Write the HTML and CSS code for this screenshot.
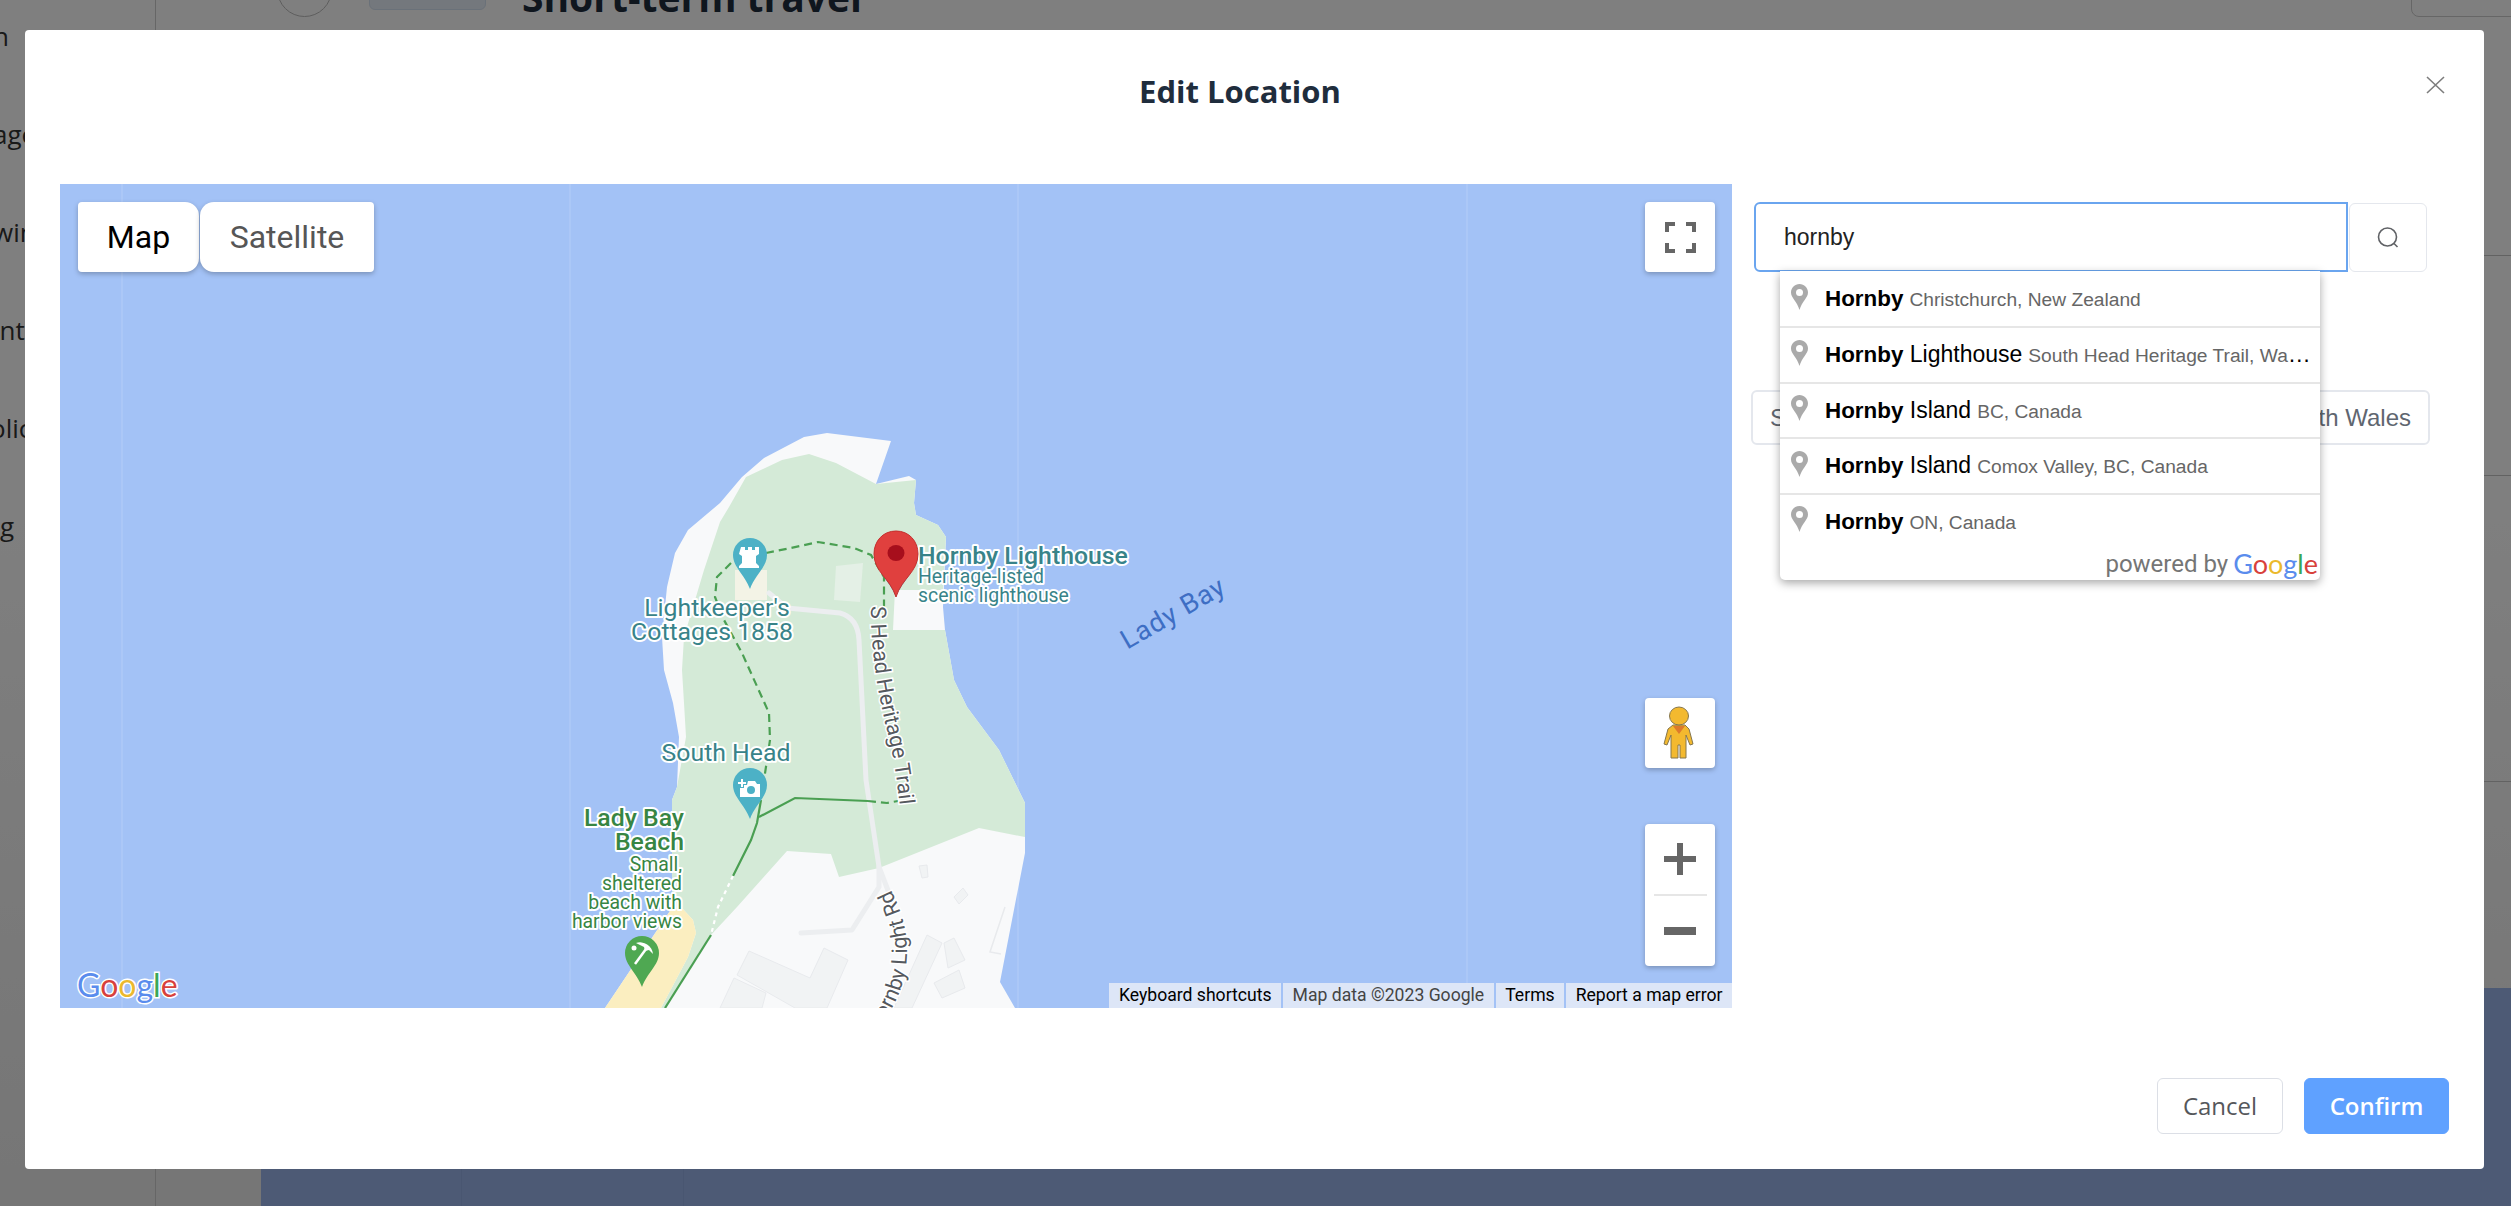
FILE: index.html
```html
<!DOCTYPE html>
<html lang="en">
    <head>
        <meta charset="UTF-8" />
        <meta name="viewport" content="width=device-width, initial-scale=1.0" />
        <title>Edit Location</title>
        <link rel="stylesheet" href="styles.css">
    </head>
    <body>
        <!-- page behind the dialog -->
        <div class="page">
            <div class="sidebar">
                <div class="nav-item">n</div>
                <div class="nav-item">age</div>
                <div class="nav-item">win</div>
                <div class="nav-item">int</div>
                <div class="nav-item nav-deep">olic</div>
                <div class="nav-item nav-flush">g</div>
            </div>
            <div class="main">
                <div class="page-head">
                    <div class="avatar"></div>
                    <div class="tag"></div>
                    <h1>Short-term travel</h1>
                    <div class="head-btn"></div>
                </div>
                <div class="line-row row-a"></div>
                <div class="line-row row-b"></div>
                <div class="line-row row-c"></div>
                <div class="spacer"></div>
                <div class="foot">
                    <div class="foot-col col-a"></div>
                    <div class="foot-col col-b"></div>
                </div>
            </div>
        </div>

        <div class="overlay"></div>

        <div class="modal">
            <div class="modal-head">
                <h2>Edit Location</h2>
                <svg class="close" viewBox="0 0 19 18">
                    <path d="M1 1L18 17M18 1L1 17" />
                </svg>
            </div>

            <div class="modal-body">
                <div class="map">
                    <svg class="map-canvas" viewBox="60 184 1672 824">
                        <defs>
                            <path id="pin" d="M-17 0a17 17 0 1 1 34 0c0 12-12 20-17 34c-5-14-17-22-17-34z" />
                        </defs>
                        <rect class="water" x="60" y="184" width="1672" height="824" />
                        <path class="seam" d="M122 184V1008M570 184V1008M1018 184V1008M1467 184V1008" />

                        <!-- land -->
                        <path class="land" d="M891 441L876 484L909 476L916 480L914 503L916 515L938 525L946 537L943 607L945 630L954 680L967 707L999 750L1025 803L1025 853L1000 982L1015 1008L605 1008L672 908L672 800L677 787L679 737L673 703L664 670L662 637L667 587L675 553L688 530L720 503L742 477L764 458L804 437L827 433Z" />
                        <path class="park" d="M876 484L916 480L914 503L916 515L938 525L946 537L943 590L895 590L893 630L945 630L954 680L967 707L999 750L1025 803L1025 837L979 828L879 868L839 877L831 854L787 851L737 907L711 935L665 1008L661 1008L688 957L696 933L693 920L682 908L672 908L672 800L677 787L686 737L684 703L682 670L684 637L704 570L720 522L729 507L746 477L782 460L809 454L836 463Z" />
                        <path class="beach" d="M672 908L682 908L693 920L696 933L688 957L661 1008L605 1008Z" />
                        <path class="patch" d="M836 566L863 563L860 602L834 600Z" />
                        <path class="patch-b" d="M735 570L767 570L767 600L735 600Z" />

                        <!-- buildings -->
                        <path class="bld" d="M749 951L810 978L824 948L848 960L827 1008L795 1008L737 975Z" />
                        <path class="bld" d="M734 978L766 993L762 1008L720 1008Z" />
                        <path class="bld" d="M927 935L942 943L912 1008L894 1008Z" />
                        <path class="bld" d="M944 943L954 938L965 960L948 968Z" />
                        <path class="bld" d="M934 983L959 970L965 988L942 998Z" />
                        <path class="bld" d="M919 866L927 865L928 877L922 878Z" />
                        <path class="bld" d="M954 897L963 888L968 895L959 904Z" />
                        <path class="bld-line" d="M1005 907L990 952L1001 954" />

                        <!-- roads -->
                        <path class="road" d="M769 593L787 608L840 613Q858 618 859 640L866 780L879 867L889 893" />
                        <path class="road" d="M879 867L879 887L852 930L801 933" />

                        <!-- trails -->
                        <path class="trail dash" d="M766 553L791 548L818 542L854 548L871 555L884 577L884 610" />
                        <path class="trail dash" d="M731 563L717 577L715 597L724 620L742 653L769 713L770 740L764 780" />
                        <path class="trail" d="M759 817L795 798L868 801" />
                        <path class="trail dash" d="M868 801L887 803L898 801" />
                        <path class="trail" d="M761 800L757 823L751 840L733 876" />
                        <path class="trail-white" d="M733 876L718 907L711 935" />
                        <path class="trail" d="M711 935L665 1008" />

                        <!-- road labels -->
                        <path id="trail-label" class="no-stroke" d="M871 606C870 650 879 700 887 730S898 790 901 816" />
                        <path id="road-label" class="no-stroke" d="M876 1032Q930 965 890 888" />
                        <text class="lbl-road"><textPath href="#trail-label">S Head Heritage Trail</textPath></text>
                        <text class="lbl-road"><textPath href="#road-label">Hornby Light Rd</textPath></text>

                        <!-- place pins -->
                        <use href="#pin" class="pin-teal" x="750" y="555" />
                        <path class="glyph" d="M741 547h4v3h3v-3h4v3h3v-3h4v7l-3 2v7l3 3v2h-20v-2l3-3v-7l-3-2z" />
                        <use href="#pin" class="pin-teal" x="750" y="785" />
                        <path class="glyph" d="M741 779h2v3h3v2h-3v3h-2v-3h-3v-2h3zM748 781h7l2 3h3v13h-20v-9h4v-3h3z" />
                        <circle class="pin-hole" cx="751" cy="790" r="4" />
                        <use href="#pin" class="pin-green" x="642" y="953" />
                        <circle class="glyph" cx="634" cy="948" r="2.5" />
                        <path class="glyph" d="M636 943a13 13 0 0 1 17 11l-4-4l-4 1l-1-4z" />
                        <path class="glyph-line" d="M646 949L635 964" />
                        <use href="#pin" class="pin-teal" x="896" y="563" />

                        <!-- place labels -->
                        <text class="lbl lbl-teal" x="717" y="616" text-anchor="middle">Lightkeeper's</text>
                        <text class="lbl lbl-teal" x="712" y="640" text-anchor="middle">Cottages 1858</text>
                        <text class="lbl lbl-teal" x="726" y="761" text-anchor="middle">South Head</text>
                        <text class="lbl lbl-teal lbl-bold" x="918" y="564">Hornby Lighthouse</text>
                        <text class="lbl lbl-teal lbl-small" x="918" y="583">Heritage-listed</text>
                        <text class="lbl lbl-teal lbl-small" x="918" y="602">scenic lighthouse</text>
                        <text class="lbl lbl-green lbl-bold" x="684" y="826" text-anchor="end">Lady Bay</text>
                        <text class="lbl lbl-green lbl-bold" x="684" y="850" text-anchor="end">Beach</text>
                        <text class="lbl lbl-green lbl-small" x="682" y="871" text-anchor="end">Small,</text>
                        <text class="lbl lbl-green lbl-small" x="682" y="890" text-anchor="end">sheltered</text>
                        <text class="lbl lbl-green lbl-small" x="682" y="909" text-anchor="end">beach with</text>
                        <text class="lbl lbl-green lbl-small" x="682" y="928" text-anchor="end">harbor views</text>
                        <text class="lbl-water" x="1173" y="622" text-anchor="middle" transform="rotate(-30 1173 613)">Lady Bay</text>

                        <!-- selected place -->
                        <path class="marker" d="M896 531C883 531 874 541 874 554C874 572 890 578 896 597C902 578 918 572 918 554C918 541 909 531 896 531Z" />
                        <ellipse class="marker-dot" cx="896" cy="553" rx="8.5" ry="8" />
                    </svg>

                    <div class="map-type">
                        <div class="map-btn active">Map</div>
                        <div class="map-btn sat">Satellite</div>
                    </div>

                    <div class="ctrl ctrl-full">
                        <svg viewBox="0 0 31 31" width="31" height="31">
                            <path d="M0 10V0H10V4H4V10zM21 0H31V10H27V4H21zM0 21H4V27H10V31H0zM27 21H31V31H21V27H27z" />
                        </svg>
                    </div>

                    <div class="ctrl ctrl-peg">
                        <svg viewBox="1645 698 70 70" width="70" height="70">
                            <path class="peg-body" d="M1673 725L1685 725L1689 729L1693 744L1690 745L1686 735L1686 758L1680 758L1680 745L1678 745L1678 758L1671 758L1671 735L1667 745L1664 744L1668 729Z" />
                            <ellipse class="peg-body" cx="1679" cy="716" rx="9.5" ry="9" />
                            <path class="peg-tie" d="M1673 726L1685 726L1679 734Z" />
                        </svg>
                    </div>

                    <div class="ctrl ctrl-zoom">
                        <div class="zoom-btn">
                            <svg viewBox="0 0 32 32" width="32" height="32"><path d="M13 0H19V13H32V19H19V32H13V19H0V13H13z" /></svg>
                        </div>
                        <div class="zoom-div"></div>
                        <div class="zoom-btn">
                            <svg viewBox="0 0 32 8" width="32" height="8"><path d="M0 0H32V8H0z" /></svg>
                        </div>
                    </div>

                    <div class="g-logo"><span class="g-blue">G</span><span class="g-red">o</span><span class="g-yellow">o</span><span class="g-blue">g</span><span class="g-green">l</span><span class="g-red">e</span></div>

                    <div class="attrib">
                        <span>Keyboard shortcuts</span>
                        <span class="muted">Map data ©2023 Google</span>
                        <span>Terms</span>
                        <span>Report a map error</span>
                    </div>
                </div>

                <div class="side">
                    <div class="search">
                        <input class="search-input" type="text" value="hornby" />
                        <button class="search-btn">
                            <svg viewBox="0 0 22 21" width="22" height="21">
                                <circle cx="10.5" cy="10" r="9" />
                                <path d="M17 16.5L20.5 20" />
                            </svg>
                        </button>
                    </div>

                    <div class="address">
                        <span>South Head</span>
                        <span>New South Wales</span>
                    </div>

                    <div class="pac">
                        <div class="pac-row">
                            <svg class="pac-pin" viewBox="0 0 17 26"><path d="M8.5 0C3.8 0 0 3.8 0 8.5C0 14 6 17 8.5 26C11 17 17 14 17 8.5C17 3.8 13.2 0 8.5 0z" /><circle cx="8.5" cy="8.5" r="3.5" /></svg>
                            <div class="pac-text"><b>Hornby</b><span class="pac-sec">Christchurch, New Zealand</span></div>
                        </div>
                        <div class="pac-row">
                            <svg class="pac-pin" viewBox="0 0 17 26"><path d="M8.5 0C3.8 0 0 3.8 0 8.5C0 14 6 17 8.5 26C11 17 17 14 17 8.5C17 3.8 13.2 0 8.5 0z" /><circle cx="8.5" cy="8.5" r="3.5" /></svg>
                            <div class="pac-text"><b>Hornby</b> Lighthouse<span class="pac-sec">South Head Heritage Trail, Watsons Bay</span></div>
                        </div>
                        <div class="pac-row">
                            <svg class="pac-pin" viewBox="0 0 17 26"><path d="M8.5 0C3.8 0 0 3.8 0 8.5C0 14 6 17 8.5 26C11 17 17 14 17 8.5C17 3.8 13.2 0 8.5 0z" /><circle cx="8.5" cy="8.5" r="3.5" /></svg>
                            <div class="pac-text"><b>Hornby</b> Island<span class="pac-sec">BC, Canada</span></div>
                        </div>
                        <div class="pac-row">
                            <svg class="pac-pin" viewBox="0 0 17 26"><path d="M8.5 0C3.8 0 0 3.8 0 8.5C0 14 6 17 8.5 26C11 17 17 14 17 8.5C17 3.8 13.2 0 8.5 0z" /><circle cx="8.5" cy="8.5" r="3.5" /></svg>
                            <div class="pac-text"><b>Hornby</b> Island<span class="pac-sec">Comox Valley, BC, Canada</span></div>
                        </div>
                        <div class="pac-row">
                            <svg class="pac-pin" viewBox="0 0 17 26"><path d="M8.5 0C3.8 0 0 3.8 0 8.5C0 14 6 17 8.5 26C11 17 17 14 17 8.5C17 3.8 13.2 0 8.5 0z" /><circle cx="8.5" cy="8.5" r="3.5" /></svg>
                            <div class="pac-text"><b>Hornby</b><span class="pac-sec">ON, Canada</span></div>
                        </div>
                        <div class="pac-foot">
                            powered by
                            <span class="pac-logo"><span class="g-blue">G</span><span class="g-red">o</span><span class="g-yellow">o</span><span class="g-blue">g</span><span class="g-green">l</span><span class="g-red">e</span></span>
                        </div>
                    </div>
                </div>
            </div>

            <div class="modal-foot">
                <button class="btn">Cancel</button>
                <button class="btn btn-primary">Confirm</button>
            </div>
        </div>
    </body>
</html>
```

FILE: styles.css
```css
/* Reset */
* {
    box-sizing: border-box;
    margin: 0;
    padding: 0;
}

body {
    font-family: "Open Sans", sans-serif;
    background: linear-gradient(#fff 40%, #ececec);
    height: 100vh;
    overflow: hidden;
    color: #222;
}

/* page behind the dialog */
.page {
    display: flex;
    height: 100vh;
}

.sidebar {
    width: 156px;
    flex-shrink: 0;
    margin-top: -13px;
    border-right: 1px solid #ccc;
}

.nav-item {
    height: 98px;
    display: flex;
    align-items: center;
    margin-left: -7px;
    font-size: 26px;
    color: #333;
}

.nav-deep {
    margin-left: -10px;
}

.nav-flush {
    margin-left: 0;
}

.main {
    flex: 1;
    display: flex;
    flex-direction: column;
    min-width: 0;
}

.page-head {
    height: 17px;
    display: flex;
    align-items: flex-end;
}

.avatar {
    width: 55px;
    height: 55px;
    margin-left: 121px;
    flex-shrink: 0;
    border: 1px solid #bbb;
    border-radius: 50%;
}

.tag {
    width: 117px;
    height: 40px;
    margin-left: 37px;
    margin-bottom: 7px;
    flex-shrink: 0;
    background: #e8f0fa;
    border: 1px solid #d5e2f2;
    border-radius: 6px;
}

.page-head h1 {
    margin-left: 36px;
    font-size: 39px;
    line-height: 40px;
    font-weight: 700;
    color: #1f2d3d;
    white-space: nowrap;
}

.head-btn {
    width: 120px;
    height: 60px;
    margin-left: auto;
    margin-right: -20px;
    flex-shrink: 0;
    border: 1px solid #ccc;
    border-radius: 8px;
}

.line-row {
    border-bottom: 1px solid #c4c4c4;
}

.row-a {
    height: 239px;
}

.row-b {
    height: 220px;
}

.row-c {
    height: 306px;
}

.spacer {
    height: 206px;
}

.foot {
    flex: 1;
    display: flex;
    margin-left: 105px;
    background: #9bb5ea;
}

.foot-col {
    border-right: 1px solid #93ade3;
}

.col-a {
    width: 201px;
}

.col-b {
    width: 222px;
}

/* dialog */
.overlay {
    position: fixed;
    top: 0;
    right: 0;
    bottom: 0;
    left: 0;
    background: rgba(0, 0, 0, 0.5);
}

.modal {
    position: fixed;
    top: 30px;
    left: 25px;
    width: 2459px;
    height: 1139px;
    padding: 0 35px;
    display: flex;
    flex-direction: column;
    background: #fff;
    border-radius: 4px;
}

.modal-head {
    height: 154px;
    padding-top: 38px;
    padding-right: 29px;
    text-align: center;
}

.modal-head h2 {
    font-size: 31px;
    line-height: 46px;
    font-weight: 700;
    color: #1f2d3d;
}

.close {
    position: absolute;
    top: 46px;
    right: 39px;
    width: 19px;
    height: 18px;
}

.close path {
    fill: none;
    stroke: #7d7d7d;
    stroke-width: 1.6;
}

.modal-body {
    display: flex;
}

.modal-foot {
    display: flex;
    justify-content: flex-end;
    gap: 21px;
    margin-top: 70px;
}

.btn {
    height: 56px;
    width: 126px;
    padding-bottom: 2px;
    font-family: "Open Sans", sans-serif;
    font-size: 24px;
    color: #55575b;
    background: #fff;
    border: 1px solid #dcdfe6;
    border-radius: 6px;
}

.btn-primary {
    width: 145px;
    font-weight: 600;
    color: #fff;
    background: #5fa1ff;
    border-color: #5fa1ff;
}

/* map */
.map {
    position: relative;
    width: 1672px;
    height: 824px;
    flex-shrink: 0;
    overflow: hidden;
    font-family: Roboto, sans-serif;
}

.map-canvas {
    display: block;
    width: 1672px;
    height: 824px;
}

.water {
    fill: #a3c2f6;
}

.seam {
    fill: none;
    stroke: #b4cdf8;
    stroke-width: 1;
}

.land {
    fill: #f8f9fa;
}

.park {
    fill: #d4ead7;
}

.beach {
    fill: #fbeec0;
}

.patch {
    fill: #e4f0e6;
}

.patch-b {
    fill: #f3f3e6;
}

.bld {
    fill: #f1f3f4;
    stroke: #e8eaed;
    stroke-width: 1;
}

.bld-line {
    fill: none;
    stroke: #e8eaed;
    stroke-width: 1.5;
}

.road {
    fill: none;
    stroke: #eceef0;
    stroke-width: 5;
    stroke-linejoin: round;
    stroke-linecap: round;
}

.trail {
    fill: none;
    stroke: #4a9f52;
    stroke-width: 2.2;
}

.dash {
    stroke-dasharray: 8 5;
}

.trail-white {
    fill: none;
    stroke: #fff;
    stroke-width: 2.2;
    stroke-dasharray: 4 4;
}

.no-stroke {
    fill: none;
}

.pin-teal {
    fill: #4cb1c6;
}

.pin-green {
    fill: #4fa852;
}

.pin-hole {
    fill: #4cb1c6;
}

.glyph {
    fill: #fff;
}

.glyph-line {
    fill: none;
    stroke: #fff;
    stroke-width: 2.5;
}

.marker {
    fill: #e0403e;
    stroke: #c5302f;
    stroke-width: 1;
}

.marker-dot {
    fill: #a70e1c;
}

.lbl,
.lbl-road,
.lbl-water {
    font-family: Roboto, sans-serif;
}

.lbl {
    font-size: 24.8px;
    paint-order: stroke;
    stroke: #fff;
    stroke-width: 4px;
    stroke-linejoin: round;
}

.lbl-teal {
    fill: #388389;
}

.lbl-green {
    fill: #378543;
}

.lbl.lbl-bold {
    font-size: 24.8px;
    font-weight: 500;
}

.lbl.lbl-small {
    font-size: 19.4px;
}

.lbl-road {
    font-size: 21.5px;
    fill: #55595e;
    paint-order: stroke;
    stroke: #fff;
    stroke-width: 3px;
}

.lbl-water {
    font-size: 27px;
    letter-spacing: 1px;
    fill: #3e6ec4;
}

/* map controls */
.map-type {
    position: absolute;
    top: 18px;
    left: 18px;
    display: flex;
    gap: 1px;
}

.map-btn {
    height: 70px;
    display: flex;
    align-items: center;
    justify-content: center;
    font-size: 32px;
    background: #fff;
    box-shadow: 0 2px 5px rgba(0, 0, 0, 0.25);
}

.active {
    width: 121px;
    color: #000;
    border-radius: 4px 14px 14px 4px;
}

.sat {
    width: 174px;
    color: #565656;
    border-radius: 14px 4px 4px 14px;
}

.ctrl {
    position: absolute;
    right: 17px;
    width: 70px;
    background: #fff;
    border-radius: 4px;
    box-shadow: 0 2px 5px rgba(0, 0, 0, 0.25);
}

.ctrl-full {
    top: 18px;
    height: 70px;
    display: flex;
    align-items: center;
    justify-content: center;
}

.ctrl-full path,
.zoom-btn path {
    fill: #666;
}

.ctrl-peg {
    top: 514px;
    height: 70px;
}

.ctrl-peg svg {
    display: block;
}

.peg-body {
    fill: #f3b92f;
    stroke: #85764d;
    stroke-width: 1;
}

.peg-tie {
    fill: #dd7a2c;
}

.ctrl-zoom {
    top: 640px;
    height: 142px;
    display: flex;
    flex-direction: column;
    align-items: center;
}

.zoom-btn {
    flex: 1;
    width: 100%;
    display: flex;
    align-items: center;
    justify-content: center;
}

.zoom-div {
    width: 53px;
    height: 2px;
    background: #e6e6e6;
}

.g-logo {
    position: absolute;
    left: 17px;
    bottom: 2px;
    font-family: Lato, sans-serif;
    font-size: 32px;
    font-weight: 400;
    line-height: 42px;
    paint-order: stroke;
    -webkit-text-stroke: 3px #fff;
}

.g-blue {
    color: #5a8ced;
}

.g-red {
    color: #d8413c;
}

.g-yellow {
    color: #ebb92d;
}

.g-green {
    color: #3aa757;
}

.attrib {
    position: absolute;
    right: 0;
    bottom: 0;
    height: 25px;
    display: flex;
    gap: 2px;
    font-size: 17.6px;
    line-height: 25px;
    color: #000;
}

.attrib span {
    padding: 0 9.5px;
    background: #dde6f7;
    white-space: nowrap;
}

.attrib .muted {
    color: #444;
}

/* search column */
.side {
    position: relative;
    width: 679px;
    margin-left: 19px;
    padding-top: 18px;
    flex-shrink: 0;
    font-family: "Liberation Sans", Arial, sans-serif;
}

.search {
    display: flex;
    margin: 0 3px;
    height: 70px;
}

.search-input {
    width: 594px;
    height: 70px;
    padding-left: 28px;
    font-family: "Liberation Sans", Arial, sans-serif;
    font-size: 23px;
    color: #222;
    border: 2px solid #6aa5ef;
    border-radius: 6px 0 0 6px;
    outline: none;
}

.search-btn {
    width: 78px;
    height: 69px;
    margin-left: 1px;
    margin-top: 1px;
    display: flex;
    align-items: center;
    justify-content: center;
    background: #fff;
    border: 1px solid #e4e7ed;
    border-radius: 6px;
}

.search-btn circle,
.search-btn path {
    fill: none;
    stroke: #606266;
    stroke-width: 1.6;
}

.address {
    height: 55px;
    margin-top: 118px;
    padding: 0 17px;
    display: flex;
    align-items: center;
    justify-content: space-between;
    font-size: 24px;
    color: #5f6670;
    white-space: nowrap;
    border: 2px solid #e4e7ed;
    border-radius: 6px;
}

.pac {
    position: absolute;
    top: 87px;
    left: 29px;
    width: 540px;
    height: 309px;
    background: #fff;
    border-radius: 0 0 5px 5px;
    box-shadow: 0 3px 10px rgba(0, 0, 0, 0.35);
}

.pac-row {
    height: 55.5px;
    padding: 0 4px 0 11px;
    display: flex;
    align-items: center;
    gap: 17px;
    font-size: 23px;
    color: #000;
    border-top: 2px solid #e6e6e6;
}

.pac-row:first-child {
    height: 55px;
    border-top: none;
}

.pac-row b {
    font-size: 22.4px;
}

.pac-pin {
    width: 17px;
    height: 26px;
    flex-shrink: 0;
    margin-top: -4px;
}

.pac-pin path {
    fill: #aaa;
}

.pac-pin circle {
    fill: #fff;
}

.pac-text {
    flex: 1;
    min-width: 0;
    white-space: nowrap;
    overflow: hidden;
    text-overflow: ellipsis;
}

.pac-sec {
    margin-left: 6px;
    font-size: 19.2px;
    color: #666;
}

.pac-foot {
    display: flex;
    justify-content: flex-end;
    align-items: center;
    gap: 5px;
    height: 31px;
    padding-right: 2px;
    font-family: Roboto, sans-serif;
    font-size: 24px;
    color: #757575;
}

.pac-logo {
    font-family: Lato, sans-serif;
    font-size: 27px;
    font-weight: 400;
}
```
